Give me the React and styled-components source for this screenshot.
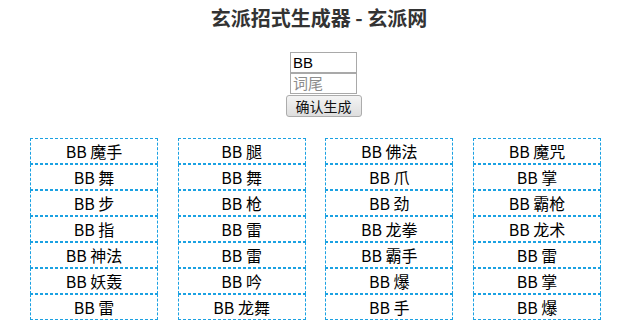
import styled, { createGlobalStyle } from 'styled-components';

const suffixes = [
    '魔手', '腿', '佛法', '魔咒',
    '舞', '舞', '爪', '掌',
    '步', '枪', '劲', '霸枪',
    '指', '雷', '龙拳', '龙术',
    '神法', '雷', '霸手', '雷',
    '妖轰', '吟', '爆', '掌',
    '雷', '龙舞', '手', '爆',
];

export default function App() {
    const prefix = 'BB';

    return (
        <Container>
            <GlobalStyle />
            <Title>玄派招式生成器 - 玄派网</Title>
            <Form onSubmit={(e) => e.preventDefault()}>
                <Input defaultValue={prefix} />
                <Input placeholder='词尾' />
                <Button type='submit'>确认生成</Button>
            </Form>
            <Results>
                {suffixes.map((suffix, i) =>
                    <Item key={i}>{prefix} {suffix}</Item>
                )}
            </Results>
        </Container>
    );
};

const GlobalStyle = createGlobalStyle`
    body {
        margin: 0;
        background: #fff;
        font-family: "Noto Sans CJK SC", "Noto Sans", sans-serif;
    }
`;

const Container = styled.div`
    width: 626px;
    height: 320px;
    overflow: hidden;
`;

const Title = styled.h1`
    margin: 0;
    padding: 5px 0 0 12px;
    height: 47px;
    box-sizing: border-box;
    text-align: center;
    font-size: 20px;
    line-height: 26px;
    font-weight: 700;
    color: #333;
`;

const Form = styled.form`
    display: flex;
    flex-direction: column;
    align-items: center;
    padding-left: 21px;
    margin-top: 5px;
`;

const Input = styled.input`
    box-sizing: border-box;
    width: 67px;
    height: 21px;
    padding: 0 2px;
    border: 1px solid #a9a9a9;
    font-family: "Liberation Sans", "Noto Sans CJK SC", sans-serif;
    font-size: 15px;
    color: #000;
    outline: none;

    &::placeholder {
        color: #8c8c8c;
        font-family: "Noto Sans CJK SC", sans-serif;
        font-size: 15px;
    }
`;

const Button = styled.button`
    box-sizing: border-box;
    width: 76px;
    height: 22px;
    margin-top: 1px;
    padding: 0;
    border: 1px solid #acacac;
    border-radius: 3px;
    background: linear-gradient(#f4f4f4, #dedede);
    font-family: "Noto Sans CJK SC", sans-serif;
    font-size: 14px;
    line-height: 18px;
    color: #111;
`;

const Results = styled.div`
    display: grid;
    grid-template-columns: repeat(4, 128px);
    column-gap: 19.67px;
    padding-left: 30px;
    margin-top: 21px;
`;

const Item = styled.div`
    box-sizing: border-box;
    height: 26px;
    border: 1px dashed #1ba1e2;
    text-align: center;
    font-size: 16px;
    line-height: 24px;
    color: #000;
`;
